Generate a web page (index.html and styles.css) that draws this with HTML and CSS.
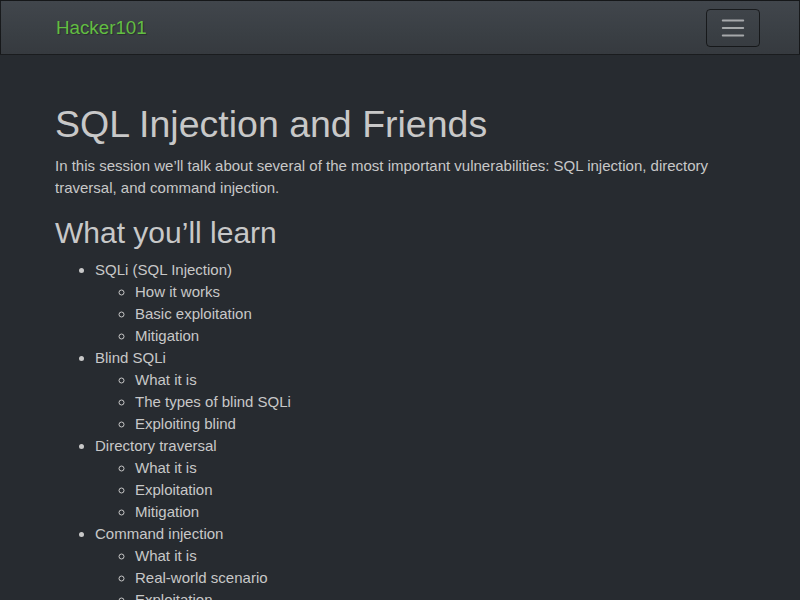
FILE: index.html
```html
<!DOCTYPE html>
<html lang="en">
<head>
<meta charset="utf-8">
<title>Hacker101</title>
<link rel="stylesheet" href="styles.css">
</head>
<body>
<nav class="navbar">
  <div class="nav-inner">
    <a class="brand" href="#">Hacker101</a>
    <button class="toggler" type="button" aria-label="Toggle navigation">
      <svg class="toggler-icon" viewBox="0 0 30 30" width="28" height="28">
        <path d="M4 7h22M4 15h22M4 23h22" stroke="rgba(255,255,255,0.55)" stroke-width="2" stroke-linecap="round" fill="none"/>
      </svg>
    </button>
  </div>
</nav>
<main class="container">
  <h1>SQL Injection and Friends</h1>
  <p>In this session we’ll talk about several of the most important vulnerabilities: SQL injection, directory traversal, and command injection.</p>
  <h2>What you’ll learn</h2>
  <ul>
    <li>SQLi (SQL Injection)
      <ul>
        <li>How it works</li>
        <li>Basic exploitation</li>
        <li>Mitigation</li>
      </ul>
    </li>
    <li>Blind SQLi
      <ul>
        <li>What it is</li>
        <li>The types of blind SQLi</li>
        <li>Exploiting blind</li>
      </ul>
    </li>
    <li>Directory traversal
      <ul>
        <li>What it is</li>
        <li>Exploitation</li>
        <li>Mitigation</li>
      </ul>
    </li>
    <li>Command injection
      <ul>
        <li>What it is</li>
        <li>Real-world scenario</li>
        <li>Exploitation</li>
        <li>Mitigation</li>
      </ul>
    </li>
  </ul>
</main>
</body>
</html>
```

FILE: styles.css
```css
*, *::before, *::after { box-sizing: border-box; }
html { font-size: 15px; }
body {
  margin: 0;
  background: #272b30;
  color: #c8c8c8;
  font-family: "Liberation Sans", Arial, sans-serif;
  font-size: 15px;
  line-height: 22px;
}
.navbar {
  background-image: linear-gradient(#41464c, #3a3f44 60%, #363a3f);
  border: 1px solid rgba(0, 0, 0, 0.6);
  padding: 7.5px 15px;
  text-shadow: 1px 1px 1px rgba(0, 0, 0, 0.3);
}
.nav-inner {
  max-width: 720px;
  margin: 0 auto;
  padding-left: 16px;
  display: flex;
  align-items: center;
  justify-content: space-between;
}
.brand {
  color: #62bd42;
  font-size: 18.75px;
  line-height: 28px;
  text-decoration: none;
}
.toggler {
  display: flex;
  align-items: center;
  justify-content: center;
  width: 54px;
  height: 38px;
  padding: 0;
  background: transparent;
  border: 1px solid rgba(0, 0, 0, 0.6);
  border-radius: 4px;
}
.toggler-icon { display: block; }
.container {
  max-width: 720px;
  margin: 0 auto;
  padding: 47px 15px 0;
}
h1 {
  font-size: 37.5px;
  font-weight: normal;
  line-height: 45px;
  margin: 0 0 7.5px;
}
h2 {
  font-size: 30px;
  font-weight: normal;
  line-height: 36px;
  margin: 0 0 8.5px;
}
p { margin: 0 0 16px; }
ul { margin: 0; padding-left: 40px; }
```
